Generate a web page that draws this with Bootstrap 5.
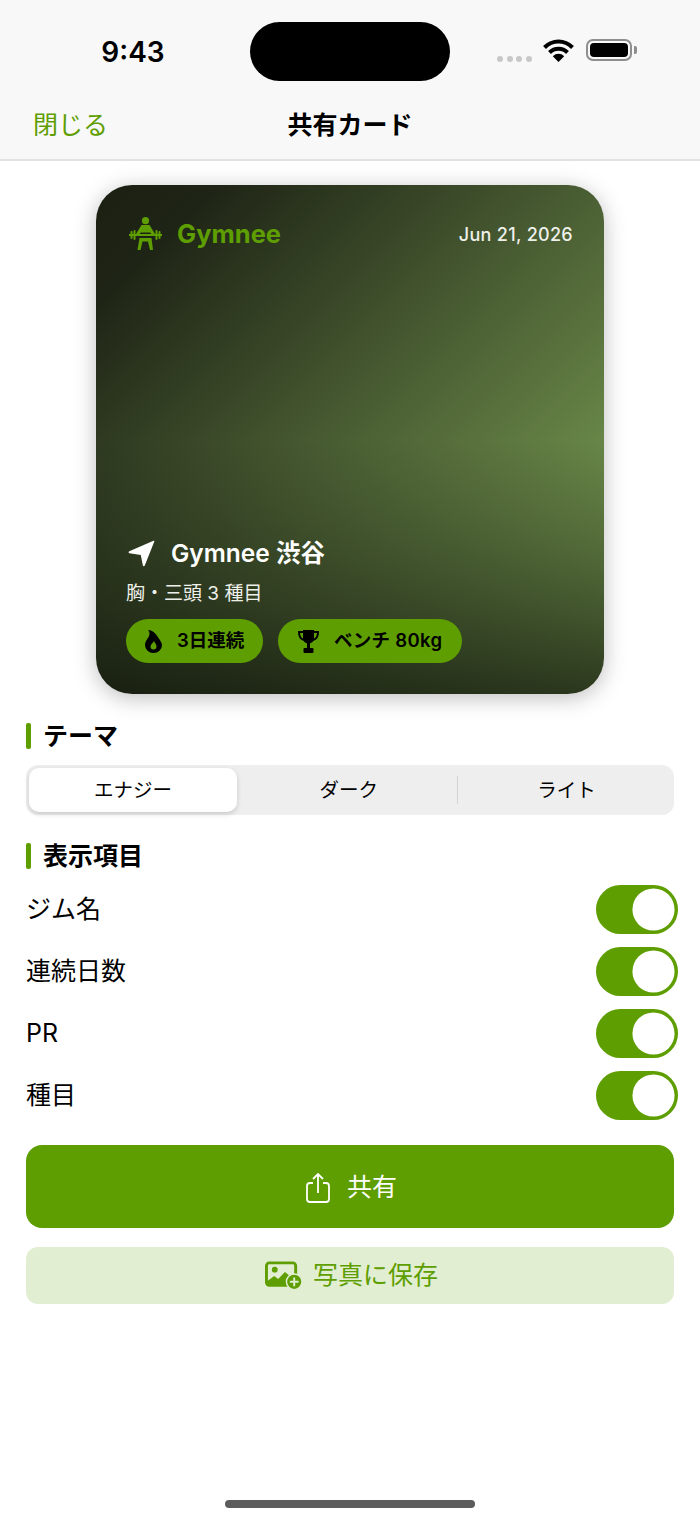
<!DOCTYPE html>
<html lang="ja">
<head>
    <meta charset="UTF-8">
    <meta name="viewport" content="width=device-width, initial-scale=1.0">
    <title>共有カード</title>
    <link href="https://cdn.jsdelivr.net/npm/bootstrap@5.3.0/dist/css/bootstrap.min.css" rel="stylesheet">
    <style>
        body {
            font-family: Inter, "Noto Sans CJK JP", sans-serif;
            background: #fff;
            color: #000;
        }

        .screen {
            width: 700px;
            height: 1521px;
            overflow: hidden;
        }

        /* header */
        .top-bar {
            height: 161px;
            background: #f8f8f8;
            border-bottom: 2px solid #e2e2e2;
        }

        .status-row { height: 81px; padding-top: 22px; }
        .status-side { width: 250px; }
        .clock { width: 250px; padding-left: 16px; font-size: 28px; font-weight: 600; line-height: 60px; text-align: center; }
        .island { width: 200px; height: 59px; background: #000; border-radius: 30px; }
        .status-icons { padding-left: 47px; padding-top: 17px; height: 59px; }
        .sig-dot { width: 6px; height: 6px; background: #c8c8c8; border-radius: 50%; }
        .sig-dots { gap: 3.5px; margin-top: 17px; margin-right: 11px; }
        .batt-shell { width: 46px; height: 22px; border: 2px solid #8e8e8e; border-radius: 7px; padding: 2px; margin-left: 12px; }
        .batt-fill { width: 100%; height: 100%; background: #000; border-radius: 4px; }
        .batt-tip { width: 3px; height: 8px; background: #8e8e8e; border-radius: 0 2px 2px 0; margin-left: 2px; margin-top: 7px; }

        .nav-row { height: 78px; padding: 12px 33px 0; font-size: 25px; }
        .nav-side { width: 120px; }
        .close-link { color: #5e9e00; text-decoration: none; }
        .nav-title { font-weight: 700; font-size: 25px; }

        /* share card */
        .share-card {
            width: 508px;
            height: 509px;
            margin: 24px auto 0;
            padding: 30px 31px 31px 30px;
            border-radius: 36px;
            color: #fff;
            background:
                linear-gradient(180deg, rgba(0,0,0,0) 50%, rgba(0,0,0,.68) 100%),
                linear-gradient(135deg, #1a1f12 0%, #1f2516 12%, #85ac5b 100%);
            box-shadow: 0 4px 22px rgba(0,0,0,.26);
        }

        .brand-mark { margin-left: 2px; }
        .brand-name { color: #5e9e00; font-size: 25.5px; font-weight: 700; margin-left: 15px; }
        .card-date { font-size: 18px; font-weight: 500; color: #eef0ea; letter-spacing: .3px; }
        .gym-arrow { margin-left: 2px; }
        .gym-name { font-size: 24.5px; font-weight: 600; margin-left: 16px; line-height: 30px; }
        .work-line { font-size: 19px; color: #eef0ea; line-height: 28px; margin-top: 12px; margin-bottom: 11px; }
        .pill-row { gap: 15px; }
        .stat-pill {
            height: 44px;
            background: #5e9e00;
            color: #000;
            font-size: 18.5px;
            font-weight: 600;
            border-radius: 22px;
            gap: 15px;
        }
        .pill-streak { width: 137px; padding-left: 19px; }
        .pill-pr { width: 184px; padding-left: 20px; letter-spacing: .3px; }

        /* settings */
        .settings { padding: 29px 26px 0; }
        .sec-head { height: 26px; font-size: 25px; font-weight: 700; line-height: 26px; }
        .sec-bar { width: 5px; height: 26px; background: #5e9e00; border-radius: 2px; margin-right: 12px; }

        .seg-box {
            height: 50px;
            margin-top: 16px;
            margin-bottom: 28px;
            background: #eeeeee;
            border-radius: 12px;
            padding: 3px;
            font-size: 19.5px;
        }
        .seg-item { flex: 1 1 0; padding-left: 4px; text-align: center; line-height: 44px; }
        .seg-on { flex: 0 0 208px; padding-left: 0; background: #fff; border-radius: 10px; box-shadow: 0 2px 5px rgba(0,0,0,.16); }
        .seg-last { flex: 0 0 213px; }
        .seg-sep { width: 1.5px; height: 28px; background: #d4d4d4; margin-top: 8px; }

        .opt-list { margin-top: 15px; }
        .opt-row { height: 50px; margin-bottom: 12px; font-size: 25px; margin-right: -4px; }
        .opt-label { padding-top: 2px; }
        .form-switch .form-check-input.gym-switch {
            display: block;
            width: 82px;
            height: 49px;
            margin: 1px 0 0;
            float: none;
            border: 0;
            border-radius: 25px;
            background-color: #5e9e00;
            background-position: right center;
            background-image: url("data:image/svg+xml,%3csvg xmlns='http://www.w3.org/2000/svg' viewBox='-25 -25 50 50'%3e%3ccircle r='21.5' fill='%23fff'/%3e%3c/svg%3e");
        }

        .act-share {
            height: 83px;
            margin-top: 25px;
            padding: 2px 0 0 3px;
            background: #5e9e00;
            border: 0;
            border-radius: 16px;
            color: #fff;
            font-size: 25px;
            gap: 17px;
        }
        .act-save {
            height: 57px;
            margin-top: 19px;
            padding: 0 0 0 3px;
            background: #e2eed2;
            border: 0;
            border-radius: 12px;
            color: #5e9e00;
            font-size: 25px;
            gap: 11px;
        }

        .home-bar {
            width: 250px;
            height: 8px;
            margin: 0 auto 13px;
            background: #5c5c5c;
            border-radius: 4px;
        }
    </style>
</head>
<body>
<div class="screen d-flex flex-column">

    <div class="top-bar">
        <div class="status-row d-flex">
            <div class="clock">9:43</div>
            <div class="island"></div>
            <div class="status-side status-icons d-flex align-items-start">
                <div class="sig-dots d-flex">
                    <span class="sig-dot"></span><span class="sig-dot"></span><span class="sig-dot"></span><span class="sig-dot"></span>
                </div>
                <svg width="31" height="23" viewBox="0 0 31 23">
                    <path d="M1.5 8.5C9.5 .5 21.5 .5 29.5 8.5" fill="none" stroke="#000" stroke-width="4"/>
                    <path d="M6.5 13.5C11.5 8.5 19.5 8.5 24.5 13.5" fill="none" stroke="#000" stroke-width="4"/>
                    <path d="M15.5 23L9.8 17.3C13 14 18 14 21.2 17.3Z" fill="#000"/>
                </svg>
                <div class="batt-shell"><div class="batt-fill"></div></div>
                <div class="batt-tip"></div>
            </div>
        </div>
        <div class="nav-row d-flex align-items-center justify-content-between">
            <div class="nav-side"><a href="#" class="close-link">閉じる</a></div>
            <div class="nav-title">共有カード</div>
            <div class="nav-side"></div>
        </div>
    </div>

    <div class="share-card d-flex flex-column">
        <div class="d-flex align-items-center justify-content-between">
            <div class="d-flex align-items-center">
                <svg class="brand-mark" width="34" height="34" viewBox="0 0 34 34" fill="#5e9e00">
                    <circle cx="17.5" cy="3.700" r="3.600"/>
                    <path d="M13.500 8h8l5.500 9h-3.500l-1.500-1.500h-9l-1.500 1.500H8z"/>
                    <rect x="1" y="17" width="33" height="2"/>
                    <rect x="2.500" y="14" width="2" height="8" rx="1"/>
                    <rect x="5.500" y="13" width="2" height="10" rx="1"/>
                    <rect x="27.500" y="13" width="2" height="10" rx="1"/>
                    <rect x="30.500" y="14" width="2" height="8" rx="1"/>
                    <path d="M11.500 21h12l1.500 12h-3l-2-8.500h-5.500l-2 8.500h-3z"/>
                </svg>
                <span class="brand-name">Gymnee</span>
            </div>
            <div class="card-date">Jun 21, 2026</div>
        </div>

        <div class="mt-auto">
            <div class="d-flex align-items-center">
                <svg class="gym-arrow" width="27" height="27" viewBox="0 0 27 27" fill="#fff">
                    <path d="M25.500 .8c.6-.2 1 .3.8.8L16.800 25.500c-.4 1-1.800.9-2-.2l-2-10.300L1.500 13.200c-1.100-.2-1.200-1.600-.2-2z"/>
                </svg>
                <span class="gym-name">Gymnee 渋谷</span>
            </div>
            <div class="work-line">胸・三頭 3 種目</div>
            <div class="d-flex pill-row">
                <div class="stat-pill pill-streak d-flex align-items-center">
                    <svg width="17" height="23" viewBox="0 0 17 23">
                        <path d="M3 0c5 0 8 4 10.500 8 2 3 3.500 5 3.500 7a8.500 8 0 0 1-17 0c0-3 1.500-5 3-7 1-1.500 1.500-3 1.500-5C4.500 2 4 1 3 0z" fill="#000"/>
                        <path d="M9 11c.5 2 2.500 3 2.500 5.500a3 3 0 0 1-6 0C5.500 14.500 8 13 9 11z" fill="#5e9e00"/>
                    </svg>
                    <span>3日連続</span>
                </div>
                <div class="stat-pill pill-pr d-flex align-items-center">
                    <svg width="21" height="23" viewBox="0 0 21 23" fill="#000">
                        <path d="M5 0h11v8c0 3-2 5.500-5.500 5.500S5 11 5 8z"/>
                        <path d="M5 2H1c0 4 1 7 5 8M16 2h4c0 4-1 7-5 8" fill="none" stroke="#000" stroke-width="2"/>
                        <rect x="9" y="13" width="3" height="5"/>
                        <rect x="5.500" y="18" width="10" height="5" rx="1"/>
                    </svg>
                    <span>ベンチ 80kg</span>
                </div>
            </div>
        </div>
    </div>

    <div class="settings">
        <div class="sec-head d-flex"><span class="sec-bar"></span>テーマ</div>
        <div class="seg-box d-flex">
            <div class="seg-item seg-on">エナジー</div>
            <div class="seg-item">ダーク</div>
            <div class="seg-sep"></div>
            <div class="seg-item seg-last">ライト</div>
        </div>

        <div class="sec-head d-flex"><span class="sec-bar"></span>表示項目</div>
        <div class="opt-list">
            <div class="opt-row d-flex align-items-center justify-content-between">
                <span class="opt-label">ジム名</span>
                <div class="form-check form-switch m-0 p-0"><input class="form-check-input gym-switch" type="checkbox" role="switch" checked></div>
            </div>
            <div class="opt-row d-flex align-items-center justify-content-between">
                <span class="opt-label">連続日数</span>
                <div class="form-check form-switch m-0 p-0"><input class="form-check-input gym-switch" type="checkbox" role="switch" checked></div>
            </div>
            <div class="opt-row d-flex align-items-center justify-content-between">
                <span class="opt-label">PR</span>
                <div class="form-check form-switch m-0 p-0"><input class="form-check-input gym-switch" type="checkbox" role="switch" checked></div>
            </div>
            <div class="opt-row d-flex align-items-center justify-content-between">
                <span class="opt-label">種目</span>
                <div class="form-check form-switch m-0 p-0"><input class="form-check-input gym-switch" type="checkbox" role="switch" checked></div>
            </div>
        </div>

        <button class="act-share btn w-100 d-flex align-items-center justify-content-center">
            <svg width="24" height="30" viewBox="0 0 24 30" fill="none" stroke="#fff" stroke-width="1.800">
                <path d="M7 10H4a3 3 0 0 0-3 3v13a3 3 0 0 0 3 3h16a3 3 0 0 0 3-3V13a3 3 0 0 0-3-3h-3"/>
                <path d="M12 20V1.500M7 6l5-5 5 5"/>
            </svg>
            <span>共有</span>
        </button>
        <button class="act-save btn w-100 d-flex align-items-center justify-content-center">
            <svg width="37" height="29" viewBox="0 0 38 29">
                <rect x="1.500" y="1.500" width="30" height="23" rx="3" fill="none" stroke="#5e9e00" stroke-width="3"/>
                <circle cx="10" cy="8.500" r="3" fill="#5e9e00"/>
                <path d="M1.500 21l8-6 4 3 7-7 11 9v3a2 2 0 0 1-2 2H3a2 2 0 0 1-2-2z" fill="#5e9e00"/>
                <circle cx="30" cy="21" r="8" fill="#5e9e00" stroke="#e2eed2" stroke-width="1.500"/>
                <path d="M30 16.500v9M25.500 21h9" stroke="#e2eed2" stroke-width="2"/>
            </svg>
            <span>写真に保存</span>
        </button>
    </div>

    <div class="home-bar mt-auto"></div>
</div>
<script src="https://cdn.jsdelivr.net/npm/bootstrap@5.3.0/dist/js/bootstrap.bundle.min.js"></script>
</body>
</html>
